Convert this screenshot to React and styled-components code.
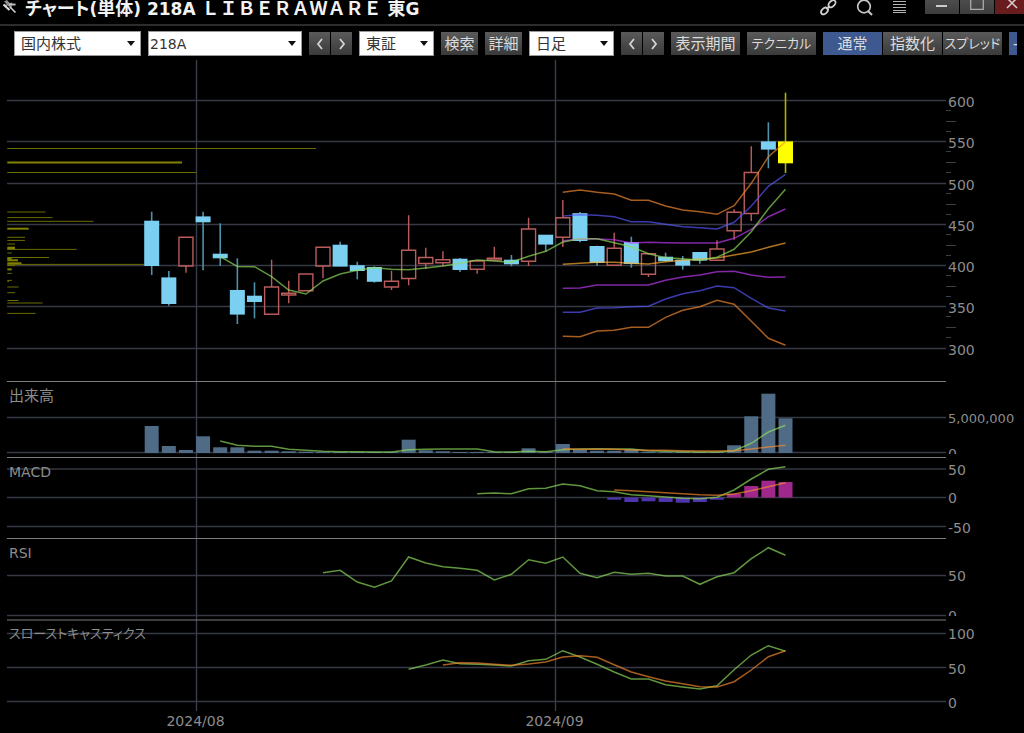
import React from "react";
import styled, { createGlobalStyle, css } from "styled-components";

const GlobalStyle = createGlobalStyle`
  * { box-sizing: border-box; }
  body {
    margin: 0;
    background: #000;
    color: #8c8c8c;
    font-family: "DejaVu Sans", "Noto Sans CJK JP", sans-serif;
    font-size: 14px;
  }
`;

const Window = styled.main`
  min-height: 100vh;
  background: #000;
  overflow: hidden;
`;

/* ---------- title bar ---------- */

const TitleBar = styled.header`
  display: flex;
  align-items: flex-start;
  height: 26px;
  border-bottom: 2px solid #2c2c2c;
`;

const PinButton = styled.button`
  width: 25px;
  height: 16px;
  padding: 0 0 0 3px;
  border: 0;
  background: none;
  display: flex;
`;

const Title = styled.h1`
  margin: 0;
  flex: 1;
  color: #f2f2f2;
  font-size: 18px;
  line-height: 18px;
  font-weight: 700;
  white-space: nowrap;
`;

const Latin = styled.span`
  font-size: 17px;
`;

const Kana = styled.span`
  font-feature-settings: "palt";
`;

const TitleTools = styled.div`
  display: flex;
  gap: 18px;
  margin-right: 16px;
`;

const IconButton = styled.button`
  width: 18px;
  height: 16px;
  padding: 0;
  border: 0;
  background: none;
  display: flex;
  justify-content: center;
`;

const WindowButtons = styled.div`
  display: flex;
  gap: 1px;
`;

const WindowButton = styled.button`
  width: ${(p) => (p.$close ? 29 : 34)}px;
  height: 14px;
  padding: 0;
  border: 0;
  display: flex;
  justify-content: ${(p) => (p.$close ? "flex-end" : "center")};
  background: ${(p) => (p.$close ? "#681c1e" : "linear-gradient(#4d4d4d, #3d3d3d)")};
`;

/* ---------- toolbar ---------- */

const Toolbar = styled.nav`
  display: flex;
  align-items: center;
  gap: 7px;
  height: 34px;
  padding: 0 0 0 14px;
  margin-right: 7px;
  overflow: hidden;
`;

const SelectBox = styled.label`
  position: relative;
  flex: none;
  width: ${(p) => p.$width}px;
  height: 25px;
`;

const Select = styled.select`
  appearance: none;
  display: block;
  width: 100%;
  height: 100%;
  padding: 1px 20px 0 ${(p) => (p.$code ? 1 : 6)}px;
  border: 1px solid #9a9a9a;
  border-radius: 0;
  background: #fff;
  color: #333;
  font-family: inherit;
  font-size: ${(p) => (p.$code ? 14 : 15)}px;
`;

const Arrow = styled.svg`
  position: absolute;
  right: 6px;
  top: 10px;
  pointer-events: none;
`;

const face = css`
  height: 23px;
  padding: 1px 0 0;
  border: 0;
  background: linear-gradient(#5a5a5a, #3a3a3a);
  color: #dcdcdc;
  font-family: inherit;
  font-size: ${(p) => (p.$kana ? 13 : 15)}px;
  line-height: 22px;
  white-space: nowrap;
`;

const Button = styled.button`
  ${face}
  flex: none;
  width: ${(p) => p.$width}px;
  font-feature-settings: "palt";
`;

const Group = styled.div`
  display: flex;
  flex: none;
  gap: 1px;
`;

const StepButton = styled.button`
  ${face}
  width: 21px;
  display: flex;
  align-items: center;
  justify-content: center;
`;

const ModeButton = styled.button`
  ${face}
  width: 59px;
  flex: none;
  font-feature-settings: "palt";
  ${(p) => p.$on && css`background: #3d5990;`}
  ${(p) => p.$start && css`text-align: left; padding-left: 4px;`}
`;

function Dropdown({ label, width, value, code }) {
  return (
    <SelectBox $width={width}>
      <Select aria-label={label} defaultValue={value} $code={code}>
        <option value={value}>{value}</option>
      </Select>
      <Arrow width="8" height="5" viewBox="0 0 8 5" aria-hidden="true">
        <path d="M0 0h8L4 5z" fill="#111" />
      </Arrow>
    </SelectBox>
  );
}

function Stepper({ label }) {
  return (
    <Group>
      <StepButton aria-label={`${label} 前へ`}>
        <svg width="8" height="12" viewBox="0 0 8 12" fill="none" stroke="#d4d4d4" strokeWidth="1.8">
          <path d="M6 1L2 6l4 5" />
        </svg>
      </StepButton>
      <StepButton aria-label={`${label} 次へ`}>
        <svg width="8" height="12" viewBox="0 0 8 12" fill="none" stroke="#d4d4d4" strokeWidth="1.8">
          <path d="M2 1l4 5-4 5" />
        </svg>
      </StepButton>
    </Group>
  );
}

/* ---------- chart ---------- */

const AXIS_WIDTH = 78;
const PLOT_LEFT = 7;
const PLOT_WIDTH = 939;
const MONTHS = [
  { x: 196.5, label: "2024/08" },
  { x: 555.5, label: "2024/09" },
];

const Chart = styled.section`
  padding-left: ${PLOT_LEFT}px;
`;

const PaneRow = styled.div`
  position: relative;
  display: grid;
  grid-template-columns: minmax(0, 1fr) ${AXIS_WIDTH}px;
  align-items: start;
`;

const Plot = styled.svg`
  display: block;
  width: 100%;
  height: ${(p) => p.$height}px;
  * { vector-effect: non-scaling-stroke; }
`;

const Axis = styled.svg`
  display: block;
  width: 100%;
  height: ${(p) => p.$height}px;
  overflow: hidden;
  fill: #8c8c8c;
`;

const PaneLabel = styled.h2`
  position: absolute;
  top: 5px;
  left: 2px;
  margin: 0;
  font-size: ${(p) => p.$size || 14}px;
  line-height: 20px;
  font-weight: 400;
  font-feature-settings: "palt";
`;

const DateRow = styled.div`
  padding-right: ${AXIS_WIDTH}px;
`;

const DateAxis = styled.svg`
  display: block;
  width: 100%;
  height: 22px;
  fill: #8c8c8c;
`;

const COLORS = {
  green: "#8fdc5c",
  orange: "#f58a30",
  amber: "#ffad30",
  blue: "#5858ff",
  purple: "#c03cf5",
  down: "#7bcff0",
  up: "#bb5c5c",
};

const dayX = (i) => 151.7 + i * 17.13;

function Line({ start, values, color }) {
  const points = values.map((y, n) => `${dayX(start + n).toFixed(1)},${y}`).join(" ");
  return (
    <polyline points={points} fill="none" stroke={COLORS[color]} strokeWidth="1.5" opacity="0.68" />
  );
}

function Bars({ start = 0, base, values, fill }) {
  return values.map((y, n) => (
    <rect
      key={n}
      x={dayX(start + n) - 7}
      y={Math.min(y, base)}
      width="14"
      height={Math.abs(base - y)}
      fill={fill}
    />
  ));
}

/* Each pane draws the slice top..bottom of one vertical scale that all panes share. */
function Pane({ label, labelSize, top, bottom, grid, divider, axisBottom = bottom, marks, ticks, markSize = 14, children }) {
  const right = PLOT_LEFT + PLOT_WIDTH + 1;
  return (
    <PaneRow>
      <Plot
        $height={bottom - top}
        viewBox={`${PLOT_LEFT} ${top} ${PLOT_WIDTH} ${bottom - top}`}
        preserveAspectRatio="none"
        role="img"
        aria-label={label || "ローソク足"}
      >
        {grid.map((y) => (
          <path key={y} d={`M${PLOT_LEFT} ${y}H${right}`} stroke="#363943" strokeWidth="1.4" />
        ))}
        {MONTHS.map((m) => (
          <path key={m.x} d={`M${m.x} ${top}V${bottom}`} stroke="#393e4a" strokeWidth="1.4" />
        ))}
        {divider && <path d={`M${PLOT_LEFT} ${divider}H${right}`} stroke="#7c7c7c" />}
        {children}
      </Plot>
      {label && <PaneLabel $size={labelSize}>{label}</PaneLabel>}
      <Axis $height={axisBottom - top}>
        {ticks &&
          ticks.map(([y, w]) => <path key={y} d={`M0 ${y - top}h${w}`} stroke="#3a3e46" />)}
        {marks.map(([text, y]) => (
          <text key={text} x="2" y={y - top} fontSize={text.length > 6 ? 13 : markSize}>
            {text}
          </text>
        ))}
      </Axis>
    </PaneRow>
  );
}

/* high, body top, body bottom, low, kind (d = down, u = up, l = latest) */
const CANDLES = [
  [211.7, 221, 265.7, 275, "d"],
  [271, 277.7, 303.7, 305.7, "d"],
  [237.3, 237.3, 266, 272.7, "u"],
  [211.7, 216.7, 222, 270.3, "d"],
  [223.3, 254, 258, 266, "d"],
  [258.3, 290.3, 314.3, 324, "d"],
  [282.3, 296, 301.7, 318.3, "d"],
  [259.7, 287, 314.3, 314.3, "u"],
  [280.7, 293.3, 295, 303.3, "u"],
  [274, 274, 290.7, 290.7, "u"],
  [247.3, 247.3, 266, 278.3, "u"],
  [241.7, 245, 266.3, 266.3, "d"],
  [261.7, 265.5, 270.7, 279.3, "d"],
  [266.3, 267.3, 281.5, 282.7, "d"],
  [270.7, 281.3, 287, 290, "u"],
  [215.3, 250.3, 278.5, 285.3, "u"],
  [247.7, 257.5, 263.5, 269, "u"],
  [251.3, 259.7, 262.7, 266.3, "u"],
  [258, 259, 269.7, 272, "d"],
  [261, 261, 269.3, 273.7, "u"],
  [246.7, 258.3, 260, 261, "u"],
  [255, 260, 264, 266.3, "d"],
  [217.7, 229, 261.3, 266, "u"],
  [235, 235, 244.3, 251.7, "d"],
  [200, 217.7, 237.3, 247, "u"],
  [212, 213.5, 240.7, 242.3, "d"],
  [245.7, 246.3, 262.7, 265.7, "d"],
  [232.7, 248.3, 265.3, 265.3, "u"],
  [236.7, 242.3, 263.7, 267.7, "d"],
  [253.7, 253.7, 274.3, 277, "u"],
  [252.7, 257, 261, 261.7, "d"],
  [256, 260, 265.3, 269.7, "d"],
  [252.3, 252.3, 260.3, 263.7, "d"],
  [240.3, 249, 260.3, 260.3, "u"],
  [209.3, 212.3, 230.7, 239.7, "u"],
  [146.3, 172.5, 213.5, 221, "u"],
  [122.3, 141.7, 149.3, 168.3, "d"],
  [92.7, 141.7, 163, 173, "l"],
];

function Candle({ index, data }) {
  const [high, top, bottom, low, kind] = data;
  const x = dayX(index);
  if (kind === "u") {
    return (
      <g stroke={COLORS.up} fill="none" strokeWidth="1.4">
        <path d={`M${x} ${high}V${top}M${x} ${bottom}V${low}`} />
        <rect x={x - 7} y={top} width="14" height={bottom - top} />
      </g>
    );
  }
  const latest = kind === "l";
  return (
    <g>
      <path
        d={`M${x} ${high}V${low}`}
        stroke={latest ? "#b0b000" : "#4f91a8"}
        strokeWidth="1.6"
      />
      <rect
        x={x - 7.5}
        y={top - 0.3}
        width="15"
        height={bottom - top + 0.6}
        fill={latest ? "#ffff00" : COLORS.down}
      />
    </g>
  );
}

/* y, right end, thickness */
const PROFILE = [
  [148.5, 316, 1], [162.6, 182, 2], [172.5, 196.5, 1],
  [212, 45.5, 1], [217.6, 52.5, 1], [221.3, 93.5, 1],
  [228.7, 28.7, 2], [237.3, 25, 1], [240.4, 25, 1],
  [244, 15, 1], [248.2, 15, 3], [249.4, 76.5, 1],
  [253, 11.7, 1], [257.5, 49, 1], [258.7, 11.7, 2],
  [260.3, 18, 2], [263.3, 21.5, 2], [264.4, 144, 1],
  [265.5, 15, 1], [269.4, 11.7, 2], [273.4, 11.7, 1],
  [280.4, 11.7, 1], [281.4, 9, 1], [287, 18.5, 1],
  [292.7, 15, 1], [300.5, 18.5, 1], [303, 42.5, 1], [313.4, 35.5, 1],
];

const BANDS = [
  ["orange", [192.3, 190, 192.3, 194, 200.3, 200.3, 206, 210, 211.7, 214.3, 205.7, 183.3, 156.7, 141.7]],
  ["blue", [216, 214.7, 215.3, 216.7, 221.7, 221.7, 224.3, 226.7, 227.7, 229, 222.3, 206, 186.3, 174.3]],
  ["purple", [240.7, 239, 239, 239.7, 243, 242.3, 242.7, 243, 243, 243, 238.3, 229.3, 216.7, 209]],
  ["purple", [288.3, 288, 285, 285, 285, 285, 280.3, 277, 275, 271.7, 271.3, 275, 277.3, 277]],
  ["blue", [312.3, 312.3, 308, 307.7, 306.7, 306.3, 299, 293.7, 290.7, 286, 287.7, 298.3, 308, 311]],
  ["orange", [336.3, 336.7, 331, 330.3, 327.3, 327.3, 317.3, 310.3, 306.7, 300.3, 304.3, 321.3, 338.3, 345.3]],
  ["amber", [264.3, 263.3, 262.3, 262.3, 263.3, 264, 261.7, 260.3, 259.3, 258, 255, 252, 247.3, 243]],
];

const SHORT_AVERAGE = [
  256.7, 266.5, 266.7, 276.7, 290, 294, 281, 274, 270.3, 267.7, 269.3, 269.7, 268, 266, 263.3,
  260, 261, 262.3, 256.3, 251.3, 242, 238.7, 238.7, 242.7, 246.7, 253.7, 257.7, 258.7, 260.3,
  257.3, 249.3, 231.7, 208.7, 189.3,
];

const VOLUME = [
  426, 446, 450, 436.3, 447.3, 447.3, 450.7, 450.7, 451.3, 451.7, 452, 452, 452, 452, 452,
  439.7, 450.3, 451.3, 452, 452, 452, 452, 448.3, 452, 444, 449.7, 450.7, 450.7, 449.3, 451.7,
  452, 452, 452, 452, 445.3, 416.3, 393.7, 418.3,
];

const VOLUME_SHORT = [
  441, 445.3, 446.3, 446.3, 449.3, 450.3, 451.3, 451.7, 451.7, 452, 452, 449.7, 449.3, 449,
  449, 449, 451.7, 452, 451.3, 451.7, 449.7, 449, 448.7, 449, 449, 450.7, 451.3, 451.7, 452,
  452, 450.7, 443.3, 432, 425.3,
];

const VOLUME_LONG = [
  448.7, 449.3, 449.3, 449.3, 450, 450.3, 450.3, 450.7, 451, 451, 450.7, 449, 447, 445.3,
];

const MACD = [
  493.7, 493, 493.7, 488.7, 488.3, 484, 485.7, 490.7, 491.7, 494.7, 495.7, 497, 498.3, 498.7,
  497.3, 490, 479, 469.3, 466.7,
];
const MACD_SIGNAL = [490, 490.7, 491.7, 492.7, 493.7, 494.7, 495.3, 494, 490.7, 486.7, 482.7];

const RSI = [
  572.7, 570.3, 582, 587.3, 581, 557, 563, 566.7, 568.3, 570.3, 580, 574.3, 559.7, 563.3, 557,
  573.3, 577.7, 572.3, 574.3, 573.3, 576, 576, 584.3, 576.7, 572.7, 558.7, 547.7, 555.3,
];

const STOCH_K = [
  669.3, 665, 660, 663.7, 664.3, 665, 666, 660.7, 659.3, 650.7, 657, 664.3, 672, 679, 679,
  684.7, 687, 689, 685.7, 669.7, 655, 645.7, 651.3,
];
const STOCH_D = [
  665, 662.7, 663, 664.3, 665.3, 664, 662, 657, 655.7, 657.3, 664.7, 672, 676.7, 681, 683.7,
  686.7, 687, 681.7, 670, 656.7, 650.7,
];

const PRICE_GRID = [100.5, 141.5, 183.5, 224.5, 265.5, 306.5, 348.5];
const PRICE_MARKS = [600, 550, 500, 450, 400, 350, 300].map((v, i) => [
  String(v),
  PRICE_GRID[i] + 6.5,
]);
const PRICE_TICKS = PRICE_GRID.slice(0, -1).flatMap((y) => [
  [y + 10, 5],
  [y + 21, 10],
  [y + 31, 5],
]);

export default function App() {
  return (
    <>
      <GlobalStyle />
      <Window>
        <TitleBar>
          <PinButton aria-label="固定">
            <svg width="14" height="14" viewBox="0 0 14 14" fill="none">
              <path d="M4 0l5 5.500-.800 3.500L1 1.500z" fill="#8f8f8f" />
              <path d="M1.200 5.800L9 3.200" stroke="#9a9a9a" strokeWidth="1.400" />
              <path d="M.5 4.500L6.500 10" stroke="#e0e0e0" strokeWidth="2" />
              <path d="M6 4.500l6.500 0" stroke="#bdbdbd" strokeWidth="2" />
              <path d="M7 7l5.500 5.500" stroke="#d0d0d0" strokeWidth="1.600" />
            </svg>
          </PinButton>
          <Title>
            <Kana>チャート</Kana>
            <Latin>(</Latin>単体<Latin>) 218A </Latin>ＬＩＢＥＲＡＷＡＲＥ<Latin> </Latin>東<Latin>G</Latin>
          </Title>
          <TitleTools>
            <IconButton aria-label="連動">
              <svg width="18" height="16" viewBox="0 0 18 16" fill="none" stroke="#d0d0d0" strokeWidth="1.8">
                <ellipse cx="5.500" cy="11" rx="3.900" ry="2.700" transform="rotate(-45 5.500 11)" />
                <ellipse cx="13" cy="3.800" rx="4.200" ry="2.700" transform="rotate(-45 13 3.800)" />
                <path d="M7.500 9.300l3.300-3.300" />
              </svg>
            </IconButton>
            <IconButton aria-label="銘柄検索">
              <svg width="18" height="16" viewBox="0 0 18 16" fill="none" stroke="#c4c4c4">
                <circle cx="9" cy="6.500" r="6.300" strokeWidth="1.700" />
                <path d="M13 11l4 4" strokeWidth="2.200" />
              </svg>
            </IconButton>
            <IconButton aria-label="メニュー">
              <svg width="14" height="16" viewBox="0 0 14 16" stroke="#b4b4b4">
                <path d="M0 1.500h13M0 4.500h13M0 7.500h13M0 10.500h13M0 12.500h13" strokeWidth="1" />
              </svg>
            </IconButton>
          </TitleTools>
          <WindowButtons>
            <WindowButton aria-label="最小化">
              <svg width="12" height="12" viewBox="0 0 12 12">
                <path d="M0 6h11" stroke="#ccc" strokeWidth="2" />
              </svg>
            </WindowButton>
            <WindowButton aria-label="最大化">
              <svg width="14" height="12" viewBox="0 0 14 12">
                <path d="M.7 0v9.300h12.600V0" stroke="#aaa" strokeWidth="1.300" fill="none" />
              </svg>
            </WindowButton>
            <WindowButton $close aria-label="閉じる">
              <svg width="18" height="12" viewBox="0 0 18 12">
                <path d="M1 -2l10 10M11 -2L1 8" stroke="#d8c8c8" strokeWidth="1.600" />
              </svg>
            </WindowButton>
          </WindowButtons>
        </TitleBar>

        <Toolbar aria-label="チャート操作">
          <Dropdown label="商品" width={127} value="国内株式" />
          <Dropdown label="銘柄コード" width={154} value="218A" code />
          <Stepper label="銘柄" />
          <Dropdown label="市場" width={75} value="東証" />
          <Button $width={37}>検索</Button>
          <Button $width={37}>詳細</Button>
          <Dropdown label="足種" width={85} value="日足" />
          <Stepper label="期間" />
          <Button $width={69}>表示期間</Button>
          <Button $width={69} $kana>テクニカル</Button>
          <Group>
            <ModeButton $on>通常</ModeButton>
            <ModeButton>指数化</ModeButton>
            <ModeButton $kana>スプレッド</ModeButton>
          </Group>
          <ModeButton $on $start aria-label="表示切替">-</ModeButton>
        </Toolbar>

        <Chart>
          <Pane top={60} bottom={381} grid={PRICE_GRID} marks={PRICE_MARKS} ticks={PRICE_TICKS}>
            {PROFILE.map(([y, end, w], i) => (
              <path key={i} d={`M7.300 ${y}H${end}`} stroke={w > 1 ? "#828200" : "#6c6c00"} strokeWidth={w} />
            ))}
            {CANDLES.map((c, i) => (
              <Candle key={i} index={i} data={c} />
            ))}
            {BANDS.map(([color, values], i) => (
              <Line key={i} start={24} values={values} color={color} />
            ))}
            <Line start={4} values={SHORT_AVERAGE} color="green" />
          </Pane>

          <Pane
            label="出来高"
            labelSize={15}
            top={381}
            bottom={457}
            axisBottom={454}
            divider={381.5}
            grid={[417.5, 452.5]}
            marks={[["5,000,000", 423], ["0", 459]]}
          >
            <Bars base={453} values={VOLUME} fill="#506b85" />
            <Line start={4} values={VOLUME_SHORT} color="green" />
            <Line start={24} values={VOLUME_LONG} color="orange" />
          </Pane>

          <Pane
            label="MACD"
            top={457}
            bottom={538}
            divider={457.5}
            grid={[469, 497.5, 526.5]}
            marks={[["50", 475], ["0", 503], ["-50", 533]]}
          >
            <Bars start={27} base={497.5} values={[499.7, 502, 501.3, 502, 502.7, 502, 499.7]} fill="#4e35ae" />
            <Bars start={34} base={497.5} values={[493.7, 486, 480.7, 482]} fill="#a0288c" />
            <Line start={19} values={MACD} color="green" />
            <Line start={27} values={MACD_SIGNAL} color="orange" />
          </Pane>

          <Pane
            label="RSI"
            top={538}
            bottom={619}
            axisBottom={616}
            divider={538.5}
            grid={[575.5, 615.5]}
            marks={[["50", 581], ["0", 621]]}
          >
            <Line start={10} values={RSI} color="green" />
          </Pane>

          <Pane
            label="スローストキャスティクス"
            labelSize={13}
            top={619}
            bottom={711}
            divider={620}
            grid={[633.5, 667.5, 701.5]}
            marks={[["100", 639], ["50", 674], ["0", 708]]}
          >
            <Line start={15} values={STOCH_K} color="green" />
            <Line start={17} values={STOCH_D} color="orange" />
          </Pane>

          <DateRow>
            <DateAxis role="img" aria-label="日付">
              {MONTHS.map((m) => (
                <text
                  key={m.label}
                  x={`${((m.x - PLOT_LEFT - 1) / PLOT_WIDTH) * 100}%`}
                  y="15"
                  textAnchor="middle"
                  fontSize="14"
                >
                  {m.label}
                </text>
              ))}
            </DateAxis>
          </DateRow>
        </Chart>
      </Window>
    </>
  );
}
